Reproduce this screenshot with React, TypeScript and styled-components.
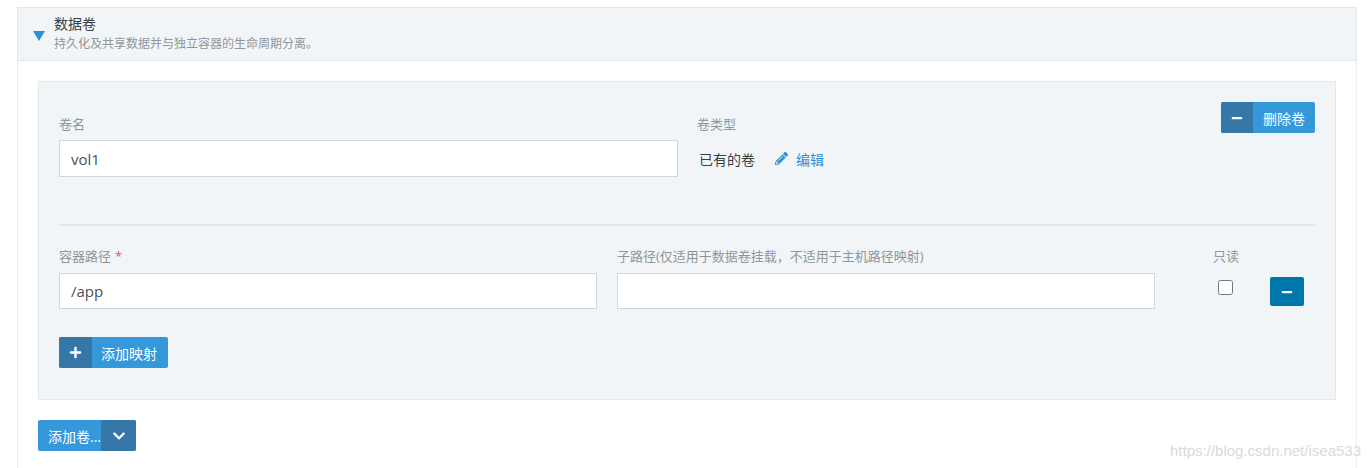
import styled, { createGlobalStyle } from 'styled-components'
import { FaChevronDown, FaMinus, FaPencilAlt, FaPlus } from 'react-icons/fa'

const GlobalStyle = createGlobalStyle`
    html, body {
        margin: 0;
        background: #fff;
    }
    body {
        font-family: "Open Sans", "Noto Sans CJK SC", sans-serif;
        font-size: 14px;
        color: #333;
    }
`

const Page = styled.div`
    position: relative;
    box-sizing: border-box;
    width: 1368px;
    height: 468px;
    padding: 7px 11px 0 17px;
    overflow: hidden;
`

const Section = styled.section`
    border-left: 1px solid #e9eef0;
    border-right: 1px solid #e9eef0;
    height: 461px;
    box-sizing: border-box;
`

const Header = styled.header`
    display: flex;
    align-items: center;
    gap: 9px;
    height: 54px;
    box-sizing: border-box;
    margin-left: -1px;
    margin-right: -1px;
    padding-left: 15px;
    background: #f1f5f7;
    border: 1px solid #e2e8ea;
`

const Caret = styled.span`
    width: 0;
    height: 0;
    margin-top: 3px;
    border-left: 6px solid transparent;
    border-right: 6px solid transparent;
    border-top: 10px solid #2f8fd5;
`

const HeaderText = styled.div`
    display: flex;
    flex-direction: column;
    gap: 1px;
    margin-top: -2px;
`

const Title = styled.h3`
    margin: 0;
    font-size: 14px;
    line-height: 20px;
    font-weight: 400;
    color: #3a3f44;
`

const Subtitle = styled.p`
    margin: 0;
    font-size: 12px;
    line-height: 17px;
    color: #8f9699;
`

const Body = styled.div`
    padding: 20px 20px 0;
`

const Panel = styled.div`
    box-sizing: border-box;
    height: 319px;
    padding: 20px 20px 0;
    background: #f1f5f7;
    border: 1px solid #e2e8ea;
`

const VolumeRow = styled.div`
    display: grid;
    grid-template-columns: 619px 1fr auto;
    column-gap: 19px;
    height: 122px;
    border-bottom: 2px solid #e2e8ea;
`

const Field = styled.div`
    display: flex;
    flex-direction: column;
    padding-top: 13px;
`

const Label = styled.label`
    display: block;
    height: 25px;
    font-size: 13px;
    line-height: 18px;
    color: #8f9699;
`

const Required = styled.span`
    margin-left: 4px;
    color: #e8525a;
`

const TextInput = styled.input<{ $height: number }>`
    box-sizing: border-box;
    width: 100%;
    height: ${p => p.$height}px;
    padding: 0 11px;
    background: #fff;
    border: 1px solid #d0d7da;
    font-family: "Open Sans", sans-serif;
    font-size: 15px;
    color: #4a4f55;
    outline: none;
`

const TypeValue = styled.div`
    display: flex;
    align-items: center;
    gap: 20px;
    height: 37px;
    padding-left: 2px;
    color: #3a3f44;
`

const EditLink = styled.a`
    display: inline-flex;
    align-items: center;
    gap: 8px;
    color: #2f8fd5;
    cursor: pointer;
`

const IconButton = styled.button`
    display: inline-flex;
    align-items: stretch;
    height: 31px;
    padding: 0;
    border: 0;
    border-radius: 2px;
    overflow: hidden;
    background: #3498db;
    color: #fff;
    font-family: inherit;
    font-size: 14px;
    cursor: pointer;
`

const IconSlot = styled.span<{ $width: number }>`
    display: flex;
    align-items: center;
    justify-content: center;
    width: ${p => p.$width}px;
    background: #3577a6;
`

const ButtonText = styled.span<{ $padding: string }>`
    display: flex;
    align-items: center;
    padding: ${p => p.$padding};
`

const RemoveVolume = styled(IconButton)`
    margin-right: 0;
    justify-self: end;
`

const MappingRow = styled.div`
    display: grid;
    grid-template-columns: 538px 538px 40px 76px;
    column-gap: 20px;
    margin-top: 21px;
`

const MappingField = styled.div`
    display: flex;
    flex-direction: column;
`

const MappingLabel = styled(Label)`
    height: 26px;
`

const CheckCell = styled.div`
    display: flex;
    flex-direction: column;
    margin-left: 38px;
    width: 40px;
`

const CheckBox = styled.input`
    width: 15px;
    height: 15px;
    margin: 7px 0 0 5px;
`

const RemoveMapping = styled.button`
    display: flex;
    align-items: center;
    justify-content: center;
    align-self: start;
    justify-self: end;
    width: 34px;
    height: 29px;
    margin-top: 30px;
    margin-right: 7px;
    padding: 0;
    border: 0;
    border-radius: 2px;
    background: #0077aa;
    color: #fff;
    cursor: pointer;
`

const AddMapping = styled(IconButton)`
    margin-top: 28px;
`

const AddVolume = styled(IconButton)`
    margin-top: 20px;
`

const Watermark = styled.div`
    position: absolute;
    right: 7px;
    top: 442px;
    font-family: "Liberation Sans", sans-serif;
    font-size: 15px;
    line-height: 18px;
    color: #d8dadb;
`

function App() {
    return (
        <Page>
            <GlobalStyle />
            <Section>
                <Header>
                    <Caret />
                    <HeaderText>
                        <Title>数据卷</Title>
                        <Subtitle>持久化及共享数据并与独立容器的生命周期分离。</Subtitle>
                    </HeaderText>
                </Header>
                <Body>
                    <Panel>
                        <VolumeRow>
                            <Field>
                                <Label htmlFor="volume-name">卷名</Label>
                                <TextInput id="volume-name" $height={37} defaultValue="vol1" />
                            </Field>
                            <Field>
                                <Label>卷类型</Label>
                                <TypeValue>
                                    已有的卷
                                    <EditLink>
                                        <FaPencilAlt size={13} />
                                        编辑
                                    </EditLink>
                                </TypeValue>
                            </Field>
                            <RemoveVolume type="button">
                                <IconSlot $width={32}><FaMinus size={12} /></IconSlot>
                                <ButtonText $padding="0 10px">删除卷</ButtonText>
                            </RemoveVolume>
                        </VolumeRow>
                        <MappingRow>
                            <MappingField>
                                <MappingLabel htmlFor="mount-path">容器路径<Required>*</Required></MappingLabel>
                                <TextInput id="mount-path" $height={36} defaultValue="/app" />
                            </MappingField>
                            <MappingField>
                                <MappingLabel htmlFor="sub-path">子路径(仅适用于数据卷挂载，不适用于主机路径映射)</MappingLabel>
                                <TextInput id="sub-path" $height={36} />
                            </MappingField>
                            <CheckCell>
                                <MappingLabel>只读</MappingLabel>
                                <CheckBox type="checkbox" />
                            </CheckCell>
                            <RemoveMapping type="button"><FaMinus size={12} /></RemoveMapping>
                        </MappingRow>
                        <AddMapping type="button">
                            <IconSlot $width={33}><FaPlus size={13} /></IconSlot>
                            <ButtonText $padding="0 11px 0 9px">添加映射</ButtonText>
                        </AddMapping>
                    </Panel>
                    <AddVolume type="button">
                        <ButtonText $padding="0 0 0 10px">添加卷...</ButtonText>
                        <IconSlot $width={35}><FaChevronDown size={14} /></IconSlot>
                    </AddVolume>
                </Body>
            </Section>
            <Watermark>https://blog.csdn.net/isea533</Watermark>
        </Page>
    )
}

export default App
